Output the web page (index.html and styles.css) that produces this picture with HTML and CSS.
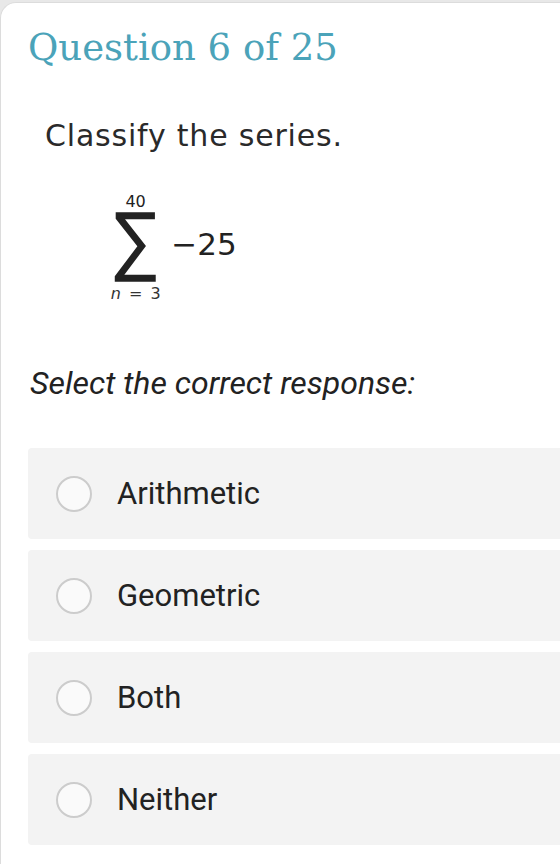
FILE: index.html
```html
<!DOCTYPE html>
<html lang="en">
<head>
<meta charset="utf-8">
<title>Question 6 of 25</title>
<link rel="stylesheet" href="styles.css">
</head>
<body>
<div class="card">
  <h1 class="title">Question 6 of 25</h1>
  <p class="prompt">Classify the series.</p>
  <div class="series">
    <div class="sigma-col">
      <span class="limit">40</span>
      <span class="sigma">∑</span>
      <span class="limit lower"><i>n</i> = 3</span>
    </div>
    <span class="term">−25</span>
  </div>
  <p class="instruction">Select the correct response:</p>
  <div class="options">
    <label class="option"><span class="radio"></span><span class="opt-text">Arithmetic</span></label>
    <label class="option"><span class="radio"></span><span class="opt-text">Geometric</span></label>
    <label class="option"><span class="radio"></span><span class="opt-text">Both</span></label>
    <label class="option"><span class="radio"></span><span class="opt-text">Neither</span></label>
  </div>
</div>
</body>
</html>
```
FILE: styles.css
```css
html, body {
  margin: 0;
  padding: 0;
}
body {
  background: #e8e8e8;
  font-family: Roboto, "Noto Sans", sans-serif;
  width: 560px;
  height: 864px;
  overflow: hidden;
}
.card {
  margin-top: 2px;
  background: #ffffff;
  border-top: 1px solid #dcdcdc;
  border-left: 1px solid #dcdcdc;
  border-top-left-radius: 16px;
  height: 900px;
  padding-left: 27px;
  overflow: hidden;
}
.title {
  margin: 0;
  padding-top: 17px;
  font-family: "DejaVu Serif", serif;
  font-weight: normal;
  font-size: 37px;
  line-height: 56px;
  color: #4ba3b9;
}
.prompt {
  margin: 43px 0 0 17px;
  font-family: "DejaVu Sans", Verdana, sans-serif;
  font-size: 30px;
  line-height: 34px;
  letter-spacing: 0.8px;
  color: #2a2a2a;
}
.series {
  display: flex;
  align-items: center;
  margin: 41px 0 0 82px;
  font-family: "DejaVu Sans", Verdana, sans-serif;
  color: #222;
}
.sigma-col {
  display: flex;
  flex-direction: column;
  align-items: center;
}
.limit {
  font-size: 16px;
  line-height: 16px;
}
.lower {
  word-spacing: 3px;
  color: #333;
}
.limit i {
  font-style: italic;
}
.sigma {
  display: block;
  font-size: 76px;
  line-height: 70px;
  margin-top: -4px;
  padding-bottom: 10px;
  transform: scaleX(0.84);
}
.term {
  font-size: 31px;
  margin-left: 10px;
  margin-bottom: 8px;
}
.instruction {
  margin: 62px 0 0 2px;
  font-style: italic;
  font-size: 32px;
  line-height: 38px;
  color: #222;
}
.options {
  margin-top: 46px;
  display: flex;
  flex-direction: column;
  gap: 11px;
}
.option {
  display: flex;
  align-items: center;
  height: 91px;
  background: #f3f3f3;
  border-radius: 4px;
  padding-left: 28px;
  width: 560px;
}
.radio {
  width: 32px;
  height: 32px;
  border: 2px solid #cccccc;
  border-radius: 50%;
  background: #fafafa;
  flex: none;
}
.opt-text {
  margin-left: 25px;
  font-size: 31px;
  color: #222;
}
```
